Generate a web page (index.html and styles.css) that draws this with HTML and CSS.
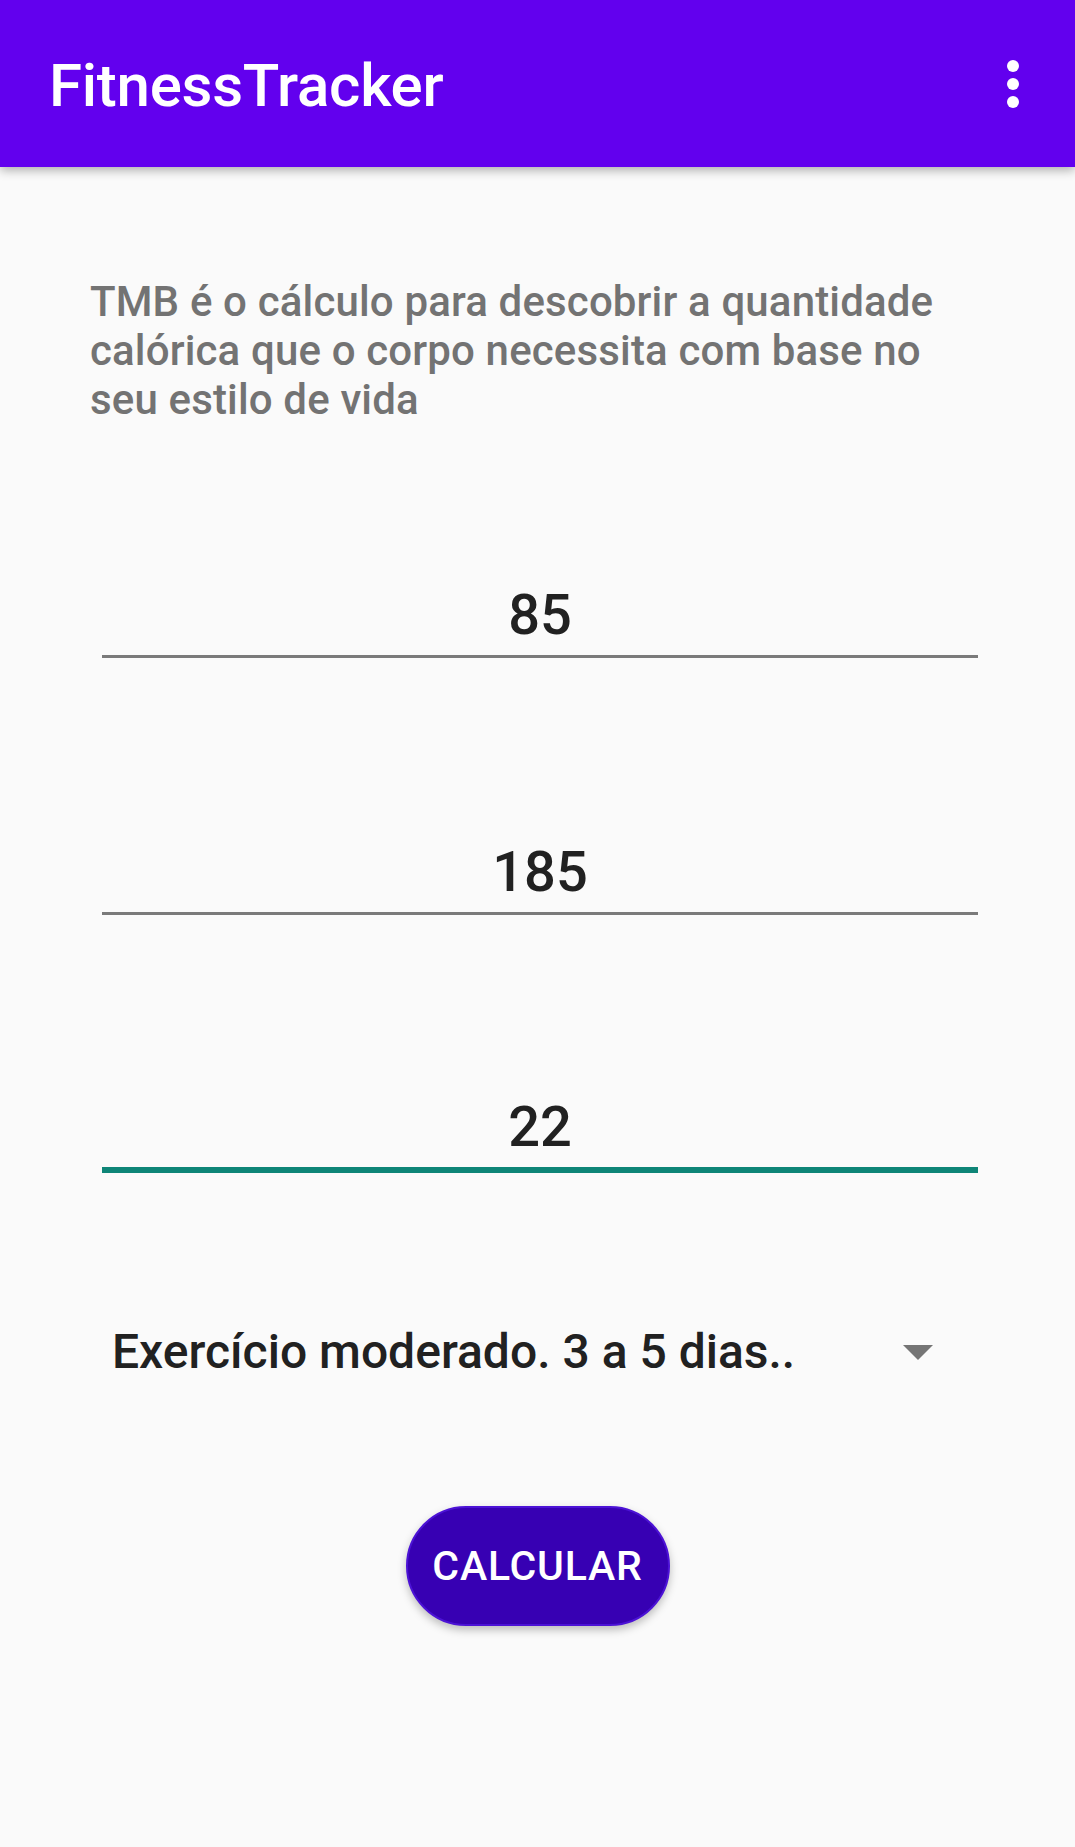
FILE: index.html
```html
<!DOCTYPE html>
<html lang="pt">
<head>
<meta charset="utf-8">
<title>FitnessTracker</title>
<link rel="stylesheet" href="styles.css">
</head>
<body>
<header class="appbar">
  <h1 class="appbar-title">FitnessTracker</h1>
  <div class="overflow" aria-label="Mais opções">
    <span class="dot"></span><span class="dot"></span><span class="dot"></span>
  </div>
</header>
<main class="content">
  <p class="desc">TMB é o cálculo para descobrir a quantidade calórica que o corpo necessita com base no seu estilo de vida</p>
  <div class="field field-first">85</div>
  <div class="field">185</div>
  <div class="field field-focused">22</div>
  <div class="spinner">
    <span class="spinner-text">Exercício moderado. 3 a 5 dias..</span>
    <span class="spinner-arrow"></span>
  </div>
  <div class="actions">
    <button class="btn">CALCULAR</button>
  </div>
</main>
</body>
</html>
```
FILE: styles.css
```css
* { box-sizing: border-box; }
html, body {
  margin: 0;
  padding: 0;
}
body {
  width: 1075px;
  height: 1847px;
  background: #fafafa;
  font-family: Roboto, "Liberation Sans", sans-serif;
  overflow: hidden;
}
.appbar {
  height: 167px;
  background: #6200ee;
  display: flex;
  justify-content: space-between;
  align-items: flex-start;
  padding: 56px 56px 0 49px;
  box-shadow: 0 3px 10px rgba(0, 0, 0, 0.32);
  position: relative;
  z-index: 1;
}
.appbar-title {
  margin: 0;
  font-size: 60px;
  line-height: 60px;
  font-weight: 500;
  letter-spacing: -0.25px;
  color: #ffffff;
}
.overflow {
  margin-top: 4px;
  display: flex;
  flex-direction: column;
  gap: 6px;
}
.dot {
  width: 12px;
  height: 12px;
  border-radius: 50%;
  background: #ffffff;
  display: block;
}
.content {
  display: flex;
  flex-direction: column;
}
.desc {
  margin: 110px 100px 0 90px;
  font-size: 42px;
  line-height: 49px;
  font-weight: 500;
  letter-spacing: 0.15px;
  color: #737373;
}
.field {
  margin: 182px 0 0 102px;
  width: 876px;
  text-align: center;
  font-size: 56px;
  line-height: 64px;
  font-weight: 500;
  color: #212121;
  padding-bottom: 8px;
  border-bottom: 3px solid #7a7a7a;
}
.field-first {
  margin-top: 159px;
}
.field-focused {
  margin-top: 180px;
  border-bottom: 6px solid #0e8577;
}
.spinner {
  margin: 149px 0 0 112px;
  width: 821px;
  display: flex;
  justify-content: space-between;
  align-items: center;
  height: 60px;
}
.spinner-text {
  font-size: 48px;
  line-height: 60px;
  font-weight: 500;
  color: #212121;
}
.spinner-arrow {
  width: 0;
  height: 0;
  border-left: 15px solid transparent;
  border-right: 15px solid transparent;
  border-top: 15px solid #757575;
}
.actions {
  display: flex;
  justify-content: center;
  margin-top: 124px;
}
.btn {
  width: 264px;
  height: 120px;
  border-radius: 60px;
  background: #3700b3;
  border: 2px solid #4c12d6;
  color: #ffffff;
  font-family: Roboto, "Liberation Sans", sans-serif;
  font-size: 41px;
  font-weight: 500;
  letter-spacing: 0.8px;
  padding: 0;
  box-shadow: 0 4px 8px rgba(0, 0, 0, 0.25);
}
```
